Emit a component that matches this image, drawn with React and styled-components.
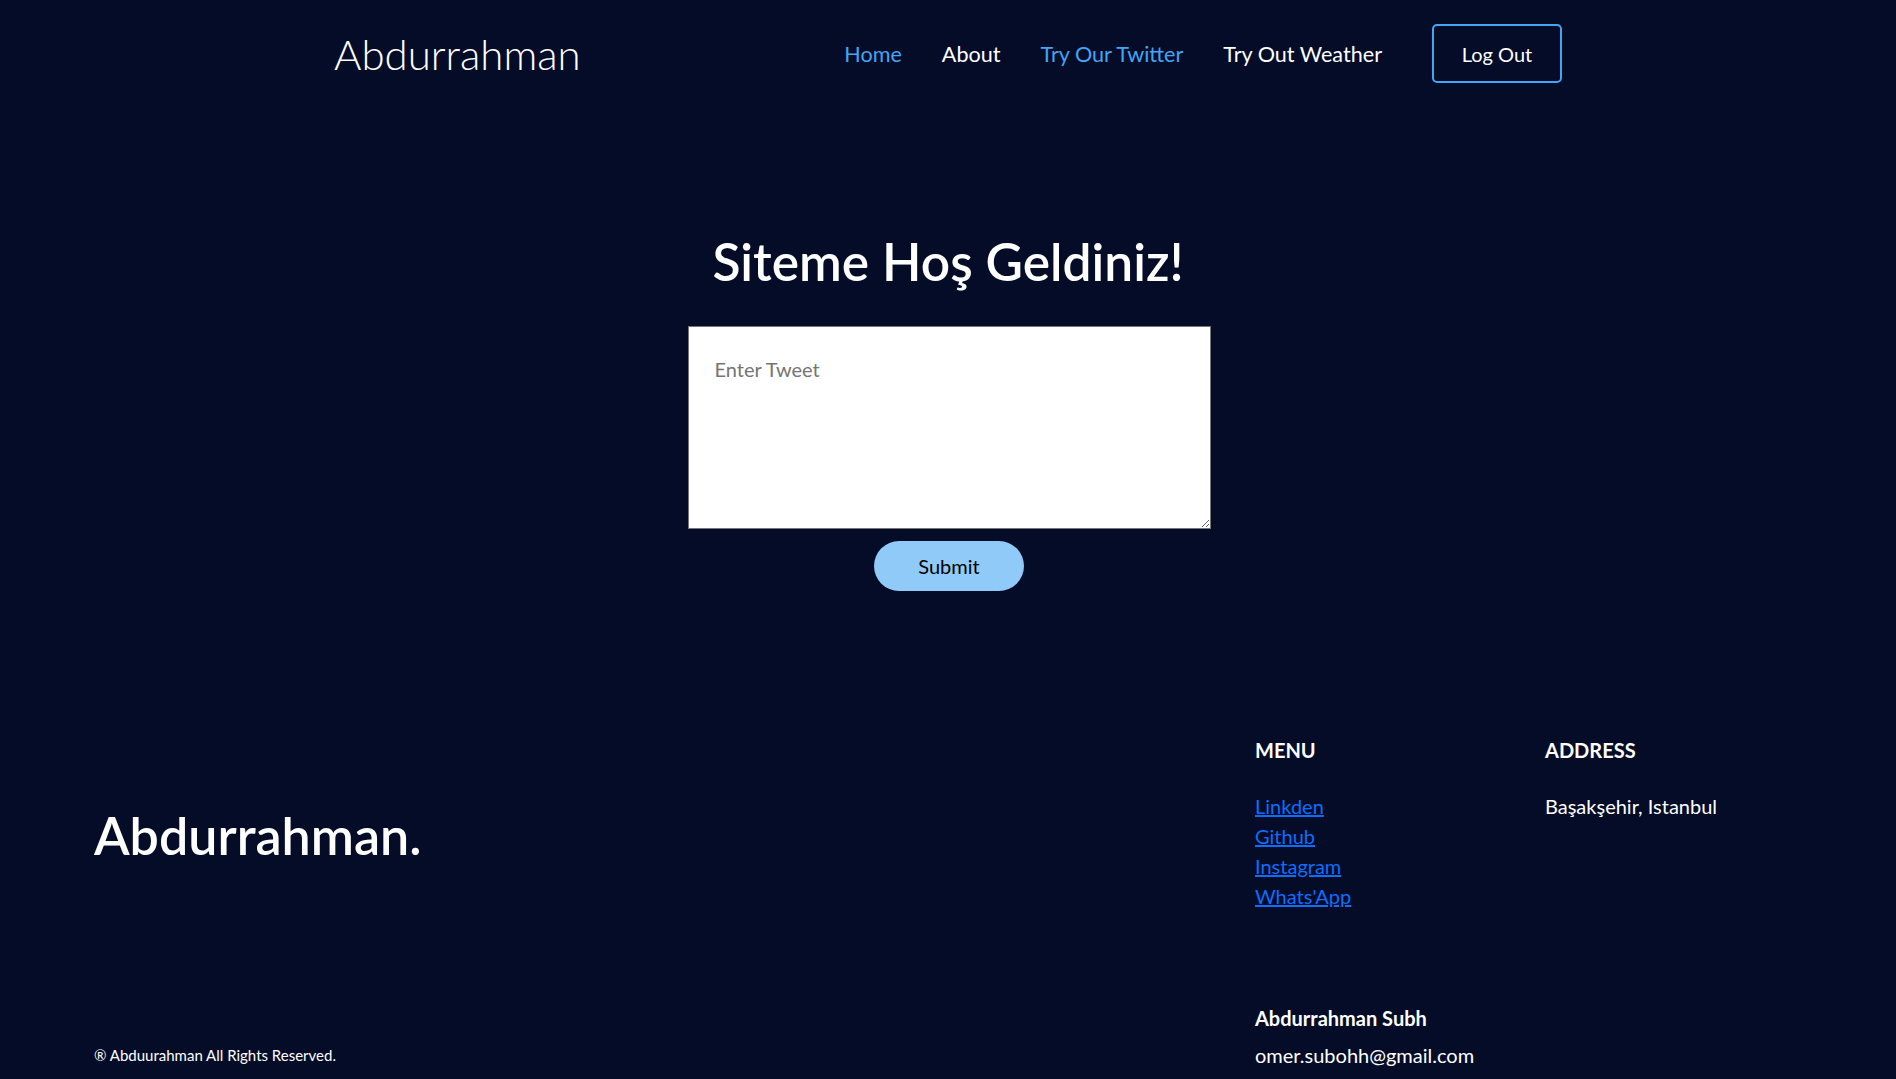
import React, { useState } from "react";
import styled, { createGlobalStyle } from "styled-components";

const GlobalStyle = createGlobalStyle`
  * {
    box-sizing: border-box;
  }
  body {
    margin: 0;
    background-color: #040c28;
    color: #ffffff;
    font-family: "Lato", "Open Sans", sans-serif;
  }
`;

const Header = styled.header`
  max-width: 1228px;
  margin: 0 auto;
  padding: 24px 0 22px;
  display: flex;
  align-items: center;
  justify-content: space-between;
`;

const Brand = styled.div`
  font-size: 42px;
  font-weight: 300;
  color: #ffffff;
`;

const NavList = styled.nav`
  display: flex;
  align-items: center;
  gap: 40px;
`;

const NavLink = styled.a`
  font-size: 21.6px;
  font-weight: 400;
  color: ${(props) => (props.$active ? "#42a5f5" : "#ffffff")};
  text-decoration: none;
  cursor: pointer;
`;

const LogOutButton = styled.button`
  margin-left: 10px;
  width: 130px;
  height: 59px;
  border: 2px solid #42a5f5;
  border-radius: 5px;
  background: transparent;
  color: #ffffff;
  font-family: inherit;
  font-size: 20px;
  cursor: pointer;
`;

const Main = styled.main`
  display: flex;
  flex-direction: column;
  align-items: center;
  padding-top: 126px;
`;

const Title = styled.h1`
  margin: 0 0 33px;
  font-size: 51.5px;
  font-weight: 600;
  line-height: 1.2;
`;

const TweetInput = styled.textarea`
  width: 523px;
  height: 203px;
  margin-left: 2px;
  padding: 30px 26px;
  border: 1px solid #767676;
  font-family: inherit;
  font-size: 20px;
  color: #000;
  background: #fff;
  &::placeholder {
    color: #757575;
  }
`;

const SubmitButton = styled.button`
  margin-top: 12px;
  margin-left: 2px;
  width: 150px;
  height: 50px;
  border: none;
  border-radius: 25px;
  background-color: #90caf9;
  color: #000;
  font-family: inherit;
  font-size: 20px;
  cursor: pointer;
`;

const Footer = styled.footer`
  margin-top: 144px;
  padding: 0 94px 20px;
  display: grid;
  grid-template-columns: 1fr 290px 257px;
`;

const FooterBrandCol = styled.div`
  display: flex;
  flex-direction: column;
  justify-content: space-between;
`;

const FooterBrand = styled.div`
  margin-top: 69px;
  font-size: 52px;
  font-weight: 600;
  line-height: 1.2;
`;

const Copyright = styled.div`
  font-size: 15px;
  line-height: 1.5;
  margin-bottom: 3px;
`;

const FooterCol = styled.div`
  display: flex;
  flex-direction: column;
  font-size: 20px;
  line-height: 30px;
`;

const ColTitle = styled.div`
  font-weight: 700;
  margin-bottom: 26px;
`;

const FooterLink = styled.a`
  color: #0d6efd;
  text-decoration: underline;
`;

const Contact = styled.div`
  margin-top: 92px;
  display: flex;
  flex-direction: column;
  gap: 7px;
`;

const ContactName = styled.div`
  font-weight: 700;
`;

const navItems = [
  { label: "Home", active: true },
  { label: "About", active: false },
  { label: "Try Our Twitter", active: true },
  { label: "Try Out Weather", active: false },
];

const menuLinks = ["Linkden", "Github", "Instagram", "Whats'App"];

const App = () => {
  const [tweet, setTweet] = useState("");

  return (
    <>
      <GlobalStyle />
      <Header>
        <Brand>Abdurrahman</Brand>
        <NavList>
          {navItems.map((item) => (
            <NavLink key={item.label} $active={item.active}>
              {item.label}
            </NavLink>
          ))}
          <LogOutButton>Log Out</LogOutButton>
        </NavList>
      </Header>

      <Main>
        <Title>Siteme Hoş Geldiniz!</Title>
        <TweetInput
          placeholder="Enter Tweet"
          value={tweet}
          onChange={(e) => setTweet(e.target.value)}
        />
        <SubmitButton>Submit</SubmitButton>
      </Main>

      <Footer>
        <FooterBrandCol>
          <FooterBrand>Abdurrahman.</FooterBrand>
          <Copyright>® Abduurahman All Rights Reserved.</Copyright>
        </FooterBrandCol>
        <FooterCol>
          <ColTitle>MENU</ColTitle>
          {menuLinks.map((link) => (
            <FooterLink key={link} href="#">
              {link}
            </FooterLink>
          ))}
          <Contact>
            <ContactName>Abdurrahman Subh</ContactName>
            <div>omer.subohh@gmail.com</div>
          </Contact>
        </FooterCol>
        <FooterCol>
          <ColTitle>ADDRESS</ColTitle>
          <div>Başakşehir, Istanbul</div>
        </FooterCol>
      </Footer>
    </>
  );
};

export default App;
